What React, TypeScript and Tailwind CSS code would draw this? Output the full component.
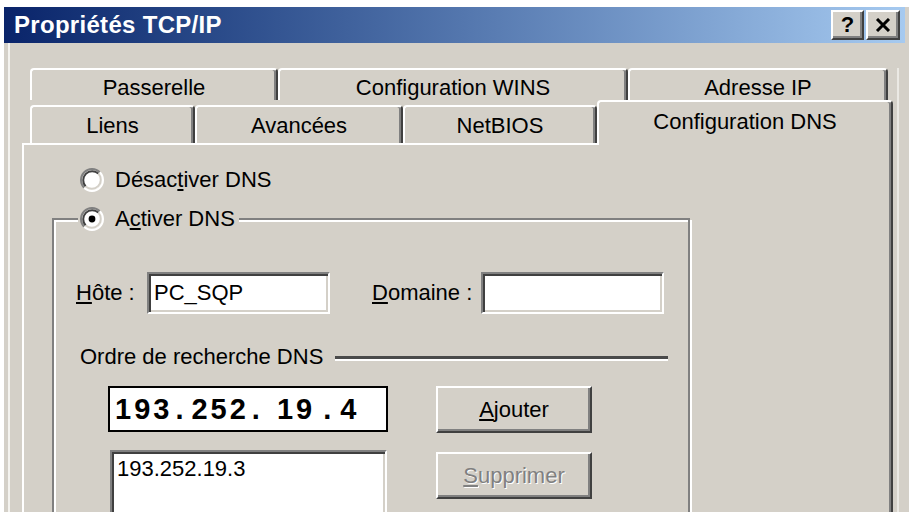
import React from "react";

// Win2000 style 3D edges, scaled up ~2.25x
const raised =
  "border-2 border-t-white border-l-white border-b-[#404040] border-r-[#404040] shadow-[inset_-2px_-2px_0_#808080]";
const sunken =
  "border-2 border-t-[#808080] border-l-[#808080] border-b-white border-r-white shadow-[inset_2px_2px_0_#404040,inset_-2px_-2px_0_#d4d0c8]";
const tabEdge =
  "flex items-center justify-center border-t-2 border-l-2 border-r-2 border-t-white border-l-white border-r-[#404040] rounded-t-[4px] shadow-[inset_-2px_0_0_#808080] bg-[#d4d0c8]";

function Radio({ checked }: { checked?: boolean }) {
  return (
    <svg width="24" height="24" viewBox="0 0 12 12" className="shrink-0">
      <circle cx="6" cy="6" r="5" fill="#fff" />
      <path d="M2.11 9.89 A5.5 5.5 0 0 1 9.89 2.11" fill="none" stroke="#808080" strokeWidth="1" />
      <path d="M9.89 2.11 A5.5 5.5 0 0 1 2.11 9.89" fill="none" stroke="#fff" strokeWidth="1" />
      <path d="M2.82 9.18 A4.5 4.5 0 0 1 9.18 2.82" fill="none" stroke="#404040" strokeWidth="1" />
      <path d="M9.18 2.82 A4.5 4.5 0 0 1 2.82 9.18" fill="none" stroke="#d4d0c8" strokeWidth="1" />
      {checked && <circle cx="6" cy="6" r="1.7" fill="#000" />}
    </svg>
  );
}

function TitleBar() {
  return (
    <div className="h-[36px] mr-[4px] flex items-center justify-between pl-[10px] pr-[5px] bg-linear-to-r from-[#0a246a] to-[#a6caf0]">
      <span className="text-white font-bold text-[24px] leading-none tracking-[0.3px]">
        Propriétés TCP/IP
      </span>
      <div className="flex gap-[2px]">
        <div className={`${raised} bg-[#d4d0c8] w-[33px] h-[30px] flex items-center justify-center`}>
          <span className="font-bold text-[22px] leading-none text-black">?</span>
        </div>
        <div className={`${raised} bg-[#d4d0c8] w-[34px] h-[30px] flex items-center justify-center`}>
          <svg width="16" height="14" viewBox="0 0 16 14">
            <path d="M2 1 L14 13 M14 1 L2 13" stroke="#000" strokeWidth="3" />
          </svg>
        </div>
      </div>
    </div>
  );
}

function Tabs() {
  return (
    <div className="pl-[8px]">
      <div className="flex h-[32px] text-[22px]">
        <div className={`${tabEdge} w-[248px] pt-[4px]`}>Passerelle</div>
        <div className={`${tabEdge} w-[350px] pt-[4px]`}>Configuration WINS</div>
        <div className={`${tabEdge} w-[260px] pt-[4px]`}>Adresse IP</div>
      </div>
      <div className="flex items-end h-[43px] text-[22px]">
        <div className={`${tabEdge} w-[165px] h-[38px]`}>Liens</div>
        <div className={`${tabEdge} w-[208px] h-[38px]`}>Avancées</div>
        <div className={`${tabEdge} w-[194px] h-[38px]`}>NetBIOS</div>
        <div className={`${tabEdge} w-[296px] h-[45px] -mb-[2px] relative z-10 pb-[4px]`}>
          Configuration DNS
        </div>
      </div>
    </div>
  );
}

function Field({ value, className }: { value?: string; className: string }) {
  return (
    <div className={`${sunken} bg-white h-[42px] flex items-center pl-[5px] ${className}`}>
      <span className="text-[22px] leading-none">{value}</span>
    </div>
  );
}

function Button({ children, disabled }: { children: React.ReactNode; disabled?: boolean }) {
  return (
    <div
      className={`${raised} bg-[#d4d0c8] w-[156px] h-[47px] flex items-center justify-center text-[22px] ${
        disabled ? "text-[#808080] [text-shadow:1px_1px_0_#fff]" : "text-black"
      }`}
    >
      {children}
    </div>
  );
}

function DnsPanel() {
  return (
    <div className="w-[871px] h-[380px] border-t-2 border-l-2 border-r-2 border-t-white border-l-white border-r-[#404040] shadow-[inset_-2px_0_0_#808080] text-[22px] leading-[26px]">
      <div className="mt-[22px] ml-[56px] flex items-center gap-[11px] h-[26px]">
        <Radio />
        <span>
          Désac<u>t</u>iver DNS
        </span>
      </div>

      <fieldset className="mt-[13px] ml-[28px] w-[638px] h-[320px] border-2 border-[#808080] shadow-[inset_2px_2px_0_#fff,2px_2px_0_#fff]">
        <legend className="ml-[24px] pl-[2px] pr-[4px] bg-[#d4d0c8]">
          <div className="flex items-center gap-[11px] h-[26px]">
            <Radio checked />
            <span>
              A<u>c</u>tiver DNS
            </span>
          </div>
        </legend>

        <div className="mt-[40px] pl-[22px] flex items-center h-[42px]">
          <span className="w-[71px] shrink-0">
            <u>H</u>ôte :
          </span>
          <Field value="PC_SQP" className="w-[183px]" />
          <span className="ml-[42px] w-[109px] shrink-0">
            <u>D</u>omaine :
          </span>
          <Field className="w-[183px]" />
        </div>

        <div className="mt-[30px] pl-[26px] pr-[20px] flex items-center h-[26px]">
          <span className="shrink-0">Ordre de recherche DNS</span>
          <div className="ml-[12px] flex-1 h-[3px] bg-[#4a4a4a] shadow-[0_2px_0_#fff]" />
        </div>

        <div className="mt-[16px] pl-[54px] flex items-start">
          <div className="w-[280px] h-[46px] border-2 border-black bg-white flex items-center pl-[5px] font-bold text-[29px] tracking-[3px] leading-none">
            <span>193</span>
            <span className="ml-[3px]">.</span>
            <span className="ml-[5px]">252</span>
            <span className="ml-[3px]">.</span>
            <span className="ml-[14px]">19</span>
            <span className="ml-[8px]">.</span>
            <span className="ml-[6px]">4</span>
          </div>
          <div className="ml-[48px]">
            <Button>
              <span>
                <u>A</u>jouter
              </span>
            </Button>
          </div>
        </div>

        <div className="mt-[17px] pl-[56px] flex items-start">
          <div className={`${sunken} bg-white w-[277px] h-[90px] pl-[5px] pt-[4px]`}>193.252.19.3</div>
          <div className="ml-[49px] mt-[2px]">
            <Button disabled>
              <span>
                <u>S</u>upprimer
              </span>
            </Button>
          </div>
        </div>
      </fieldset>
    </div>
  );
}

export default function App() {
  return (
    <div className="w-[909px] h-[512px] overflow-hidden bg-white pt-[7px] pl-[4px] font-['Liberation_Sans',Arial,sans-serif] text-black">
      <div className="h-[505px] bg-[#d4d0c8]">
        <TitleBar />
        <div className="ml-[4px] h-[469px] border-l-2 border-[#f4f3ef] pl-[12px] pt-[25px] flex">
          <div>
            <Tabs />
            <DnsPanel />
          </div>
          <div className="ml-[4px] w-[2px] bg-[#ebe9e4]" />
        </div>
      </div>
    </div>
  );
}
